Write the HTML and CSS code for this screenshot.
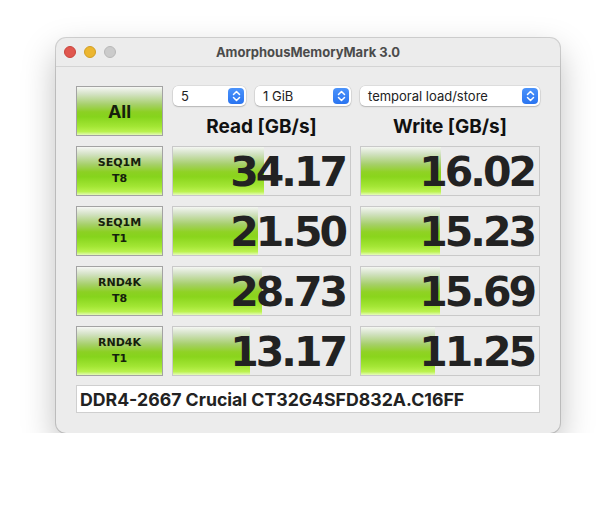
FILE: index.html
```html
<!DOCTYPE html>
<html>
<head>
<meta charset="utf-8">
<link rel="stylesheet" href="styles.css">
</head>
<body>
<div class="window">
  <div class="titlebar">
    <div class="lights">
      <span class="light red"></span>
      <span class="light yellow"></span>
      <span class="light grey"></span>
    </div>
    <div class="title">AmorphousMemoryMark 3.0</div>
  </div>
  <div class="content">
    <div class="grid">
      <button class="btn btn-all">All</button>
      <div class="col-head">
        <div class="selects">
          <div class="select s1"><span>5</span><span class="stepper"><svg width="9" height="12" viewBox="0 0 9 12"><path d="M1.5 4.5 L4.5 1.5 L7.5 4.5 M1.5 7.5 L4.5 10.5 L7.5 7.5" fill="none" stroke="#fff" stroke-width="1.5" stroke-linecap="round" stroke-linejoin="round"/></svg></span></div>
          <div class="select s2"><span>1 GiB</span><span class="stepper"><svg width="9" height="12" viewBox="0 0 9 12"><path d="M1.5 4.5 L4.5 1.5 L7.5 4.5 M1.5 7.5 L4.5 10.5 L7.5 7.5" fill="none" stroke="#fff" stroke-width="1.5" stroke-linecap="round" stroke-linejoin="round"/></svg></span></div>
        </div>
        <div class="heading">Read [GB/s]</div>
      </div>
      <div class="col-head">
        <div class="selects">
          <div class="select s3"><span>temporal load/store</span><span class="stepper"><svg width="9" height="12" viewBox="0 0 9 12"><path d="M1.5 4.5 L4.5 1.5 L7.5 4.5 M1.5 7.5 L4.5 10.5 L7.5 7.5" fill="none" stroke="#fff" stroke-width="1.5" stroke-linecap="round" stroke-linejoin="round"/></svg></span></div>
        </div>
        <div class="heading">Write [GB/s]</div>
      </div>

      <button class="btn btn-test">SEQ1M<br>T8</button>
      <div class="meter"><div class="fill" style="width:91px"></div><span class="num">34.17</span></div>
      <div class="meter"><div class="fill" style="width:80px"></div><span class="num">16.02</span></div>

      <button class="btn btn-test">SEQ1M<br>T1</button>
      <div class="meter"><div class="fill" style="width:85px"></div><span class="num">21.50</span></div>
      <div class="meter"><div class="fill" style="width:79px"></div><span class="num">15.23</span></div>

      <button class="btn btn-test">RND4K<br>T8</button>
      <div class="meter"><div class="fill" style="width:89px"></div><span class="num">28.73</span></div>
      <div class="meter"><div class="fill" style="width:79px"></div><span class="num">15.69</span></div>

      <button class="btn btn-test">RND4K<br>T1</button>
      <div class="meter"><div class="fill" style="width:77px"></div><span class="num">13.17</span></div>
      <div class="meter"><div class="fill" style="width:74px"></div><span class="num">11.25</span></div>
    </div>
    <div class="info">DDR4-2667 Crucial CT32G4SFD832A.C16FF</div>
  </div>
</div>
</body>
</html>
```
FILE: styles.css
```css
html, body {
  margin: 0;
  padding: 0;
  background: #ffffff;
}
body {
  padding: 38px 0 0 56px;
  font-family: Inter, "Liberation Sans", sans-serif;
}
.window {
  width: 504px;
  height: 395px;
  box-sizing: border-box;
  background: #ececec;
  border-radius: 10px;
  box-shadow: 0 0 0 1px rgba(0,0,0,0.16), 0 14px 34px rgba(0,0,0,0.26);
  display: flex;
  flex-direction: column;
  overflow: hidden;
}
.titlebar {
  height: 28px;
  flex: none;
  border-bottom: 1px solid #d4d4d4;
  display: flex;
  align-items: center;
  position: relative;
}
.lights {
  display: flex;
  gap: 8px;
  padding-left: 8px;
}
.light {
  width: 12px;
  height: 12px;
  border-radius: 50%;
  box-sizing: border-box;
}
.red { background: #e0574f; border: 0.5px solid #c9443c; }
.yellow { background: #ecb630; border: 0.5px solid #d19f24; }
.grey { background: #cbcbcb; border: 0.5px solid #b8b8b8; }
.title {
  position: absolute;
  left: 0;
  right: 0;
  text-align: center;
  font-size: 13px;
  font-weight: 700;
  color: #4b4b4b;
}
.content {
  padding: 19px 20px 0 20px;
}
.grid {
  display: grid;
  grid-template-columns: 87px 179px 180px;
  grid-auto-rows: 50px;
  column-gap: 9px;
  row-gap: 10px;
}
.btn {
  margin: 0;
  padding: 0;
  border: 1px solid #a3a3a3;
  background: linear-gradient(to bottom, #f6f7f4 0%, #d6e3c8 14%, #a7d06c 36%, #8cd023 52%, #86d41c 62%, #a2e634 82%, #b9f24e 93%, #e4fbb8 100%);
  color: #16200c;
  font-weight: 700;
  font-family: "DejaVu Sans", sans-serif;
  text-align: center;
  cursor: default;
}
.btn-all {
  font-family: Inter, "Liberation Sans", sans-serif;
  font-size: 18px;
}
.btn-test {
  font-size: 11px;
  line-height: 16px;
}
.col-head {
  display: flex;
  flex-direction: column;
}
.selects {
  display: flex;
  gap: 9px;
  height: 20px;
}
.select {
  box-sizing: border-box;
  height: 20px;
  background: #fff;
  border-radius: 5px;
  box-shadow: 0 0 0 0.5px rgba(0,0,0,0.12), 0 1px 1.5px rgba(0,0,0,0.18);
  display: flex;
  align-items: center;
  justify-content: space-between;
  padding: 0 2px 0 8px;
  font-size: 13px;
  color: #222;
}
.s1 { width: 73px; margin-left: 1px; }
.s2 { width: 96px; }
.s3 { width: 180px; }
.stepper {
  width: 16px;
  height: 16px;
  border-radius: 4px;
  background: linear-gradient(to bottom, #4b93fb, #2a74f0);
  display: flex;
  align-items: center;
  justify-content: center;
}
.heading {
  flex: 1;
  display: flex;
  align-items: center;
  justify-content: center;
  font-size: 19px;
  font-weight: 700;
  color: #111;
  padding-top: 9px;
}
.meter {
  position: relative;
  box-sizing: border-box;
  border: 1px solid #c9c9c9;
  background: #ebebeb;
  display: flex;
  align-items: center;
  justify-content: flex-end;
  padding-right: 5px;
  overflow: hidden;
}
.fill {
  position: absolute;
  left: 0;
  top: 0;
  bottom: 0;
  background: linear-gradient(to bottom, #f4f6f2 0%, #d3e2c4 14%, #a6cf6a 36%, #90d224 52%, #8ad51c 62%, #a4e636 82%, #bcf250 93%, #e6fcbc 100%);
}
.num {
  position: relative;
  font-family: "DejaVu Sans", sans-serif;
  font-weight: 700;
  font-size: 41px;
  letter-spacing: -3px;
  color: #222;
  line-height: 1;
  top: 1px;
}
.info {
  margin-top: 9px;
  height: 28px;
  box-sizing: border-box;
  background: #fff;
  border: 1px solid #cfcfcf;
  display: flex;
  align-items: center;
  padding-left: 3px;
  font-size: 17.7px;
  font-weight: 700;
  color: #222;
}
```
